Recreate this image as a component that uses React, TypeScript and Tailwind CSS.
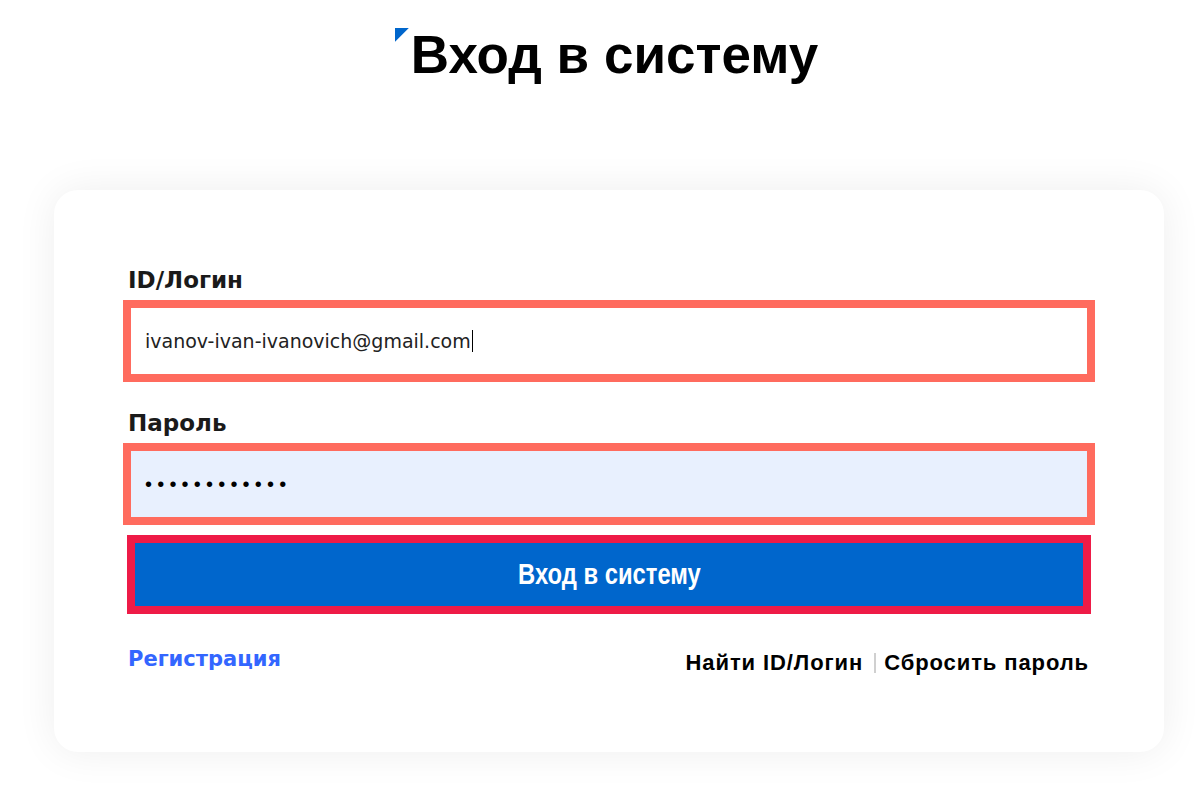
export default function App() {
  return (
    <div className="min-h-[786px] bg-white" style={{ fontFamily: "'DejaVu Sans', Inter, sans-serif" }}>
      {/* Page Title */}
      <div className="flex justify-center pt-[28px] pl-[18px]">
        <h1 className="relative pl-[16px] font-['Liberation_Sans',Arial,sans-serif] text-[53px] font-bold leading-none text-black">
          <span className="absolute left-0 top-0 h-[14px] w-[14px] bg-[#0066cc] [clip-path:polygon(0_0,100%_0,0_100%)]" />
          Вход в систему
        </h1>
      </div>

      {/* Login Card */}
      <div className="ml-[54px] mt-[109px] w-[1110px] rounded-[24px] bg-white px-[69px] pb-[74px] pt-[75px] shadow-[0_0_40px_rgba(0,0,0,0.07)]">
        <label className="mb-[5px] block pl-[5px] text-[23px] font-bold leading-[30px] text-[#1a1a1a]">
          ID/Логин
        </label>
        <div className="flex h-[82px] items-center border-[8px] border-[#ff6b5e] bg-white px-[14px]">
          <span className="text-[19px] text-[#222]">ivanov-ivan-ivanovich@gmail.com</span>
          <span className="ml-[1px] h-[22px] w-[1px] bg-black" />
        </div>

        <label className="mb-[5px] mt-[26px] block pl-[5px] text-[23px] font-bold leading-[30px] text-[#1a1a1a]">
          Пароль
        </label>
        <div className="flex h-[82px] items-center border-[8px] border-[#ff6b5e] bg-[#e8f0fe] px-[14px]">
          <span className="font-['Liberation_Sans',Arial,sans-serif] text-[20px] leading-none tracking-[5.2px] text-black">
            ••••••••••••
          </span>
        </div>

        {/* Submit Button */}
        <button className="mx-[4px] mt-[10px] flex h-[79px] w-[964px] items-center justify-center border-[8px] border-[#ee1b47] bg-[#0066cc] text-white">
          <span className="inline-block scale-x-[0.82] font-['Liberation_Sans',Arial,sans-serif] text-[29px] font-bold leading-none">
            Вход в систему
          </span>
        </button>

        {/* Links */}
        <div className="mt-[30px] flex items-start justify-between">
          <a className="pl-[5px] text-[21px] font-bold leading-[30px] text-[#3366ff]">Регистрация</a>
          <div className="mt-[4px] flex items-center font-['Liberation_Sans',Arial,sans-serif] text-[22px] font-bold leading-[30px] tracking-[0.9px] text-black">
            <a>Найти ID/Логин</a>
            <span className="ml-[11px] mr-[8px] h-[20px] w-[2px] bg-[#d0d0d0]" />
            <a className="mr-[6px]">Сбросить пароль</a>
          </div>
        </div>
      </div>
    </div>
  );
}
